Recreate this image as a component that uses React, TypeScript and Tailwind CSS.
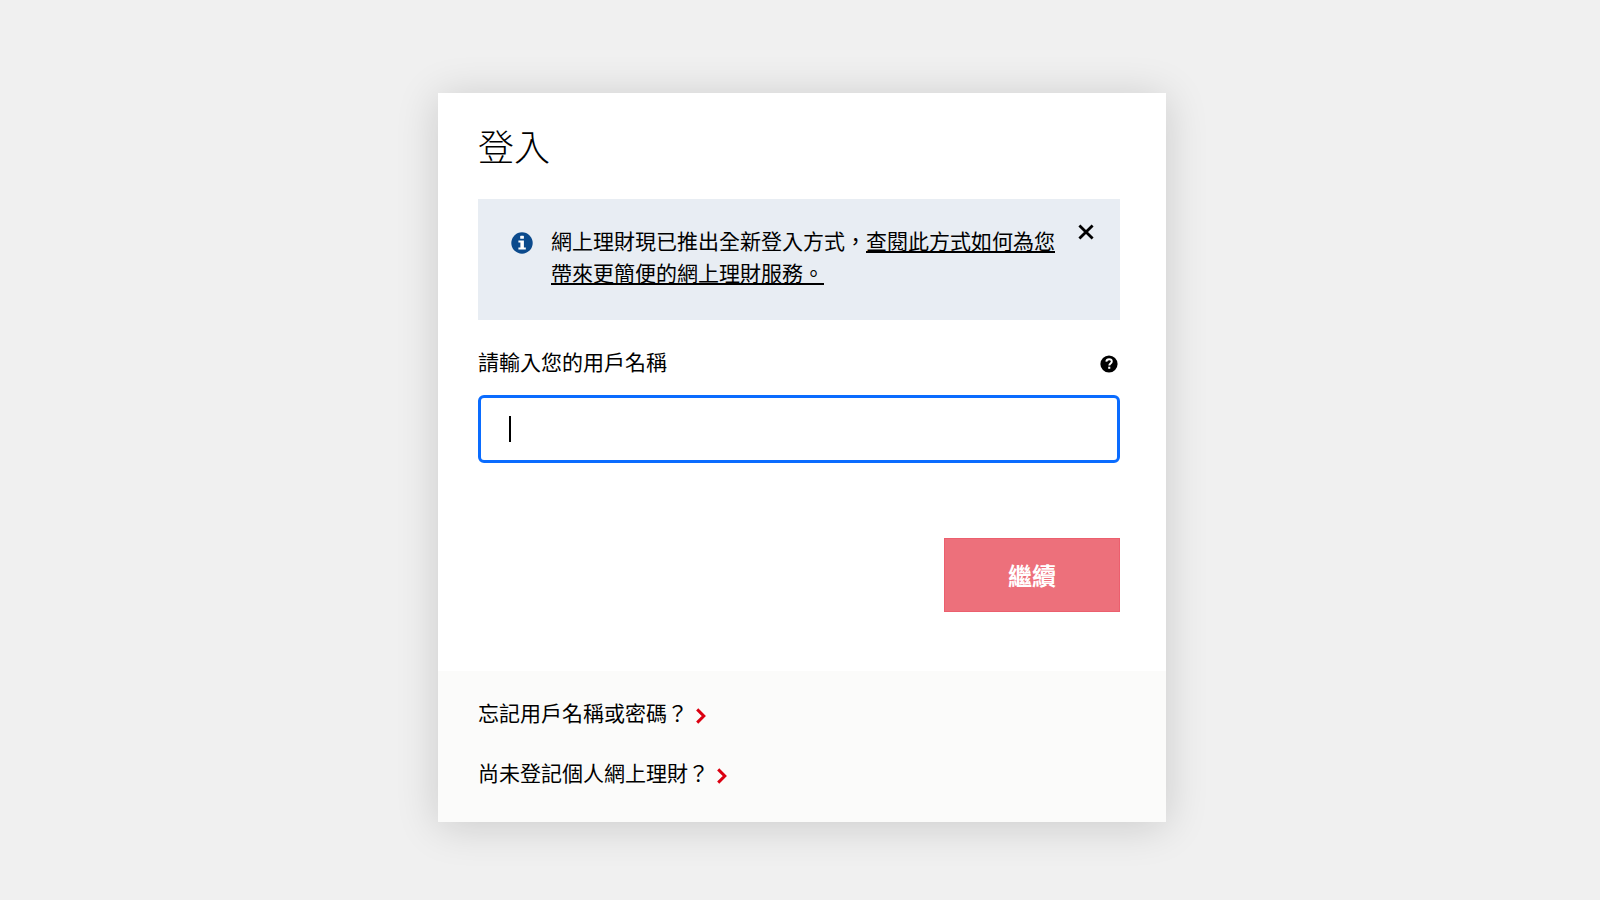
import { useState } from "react";

const HELP_LINKS = [
  { label: "忘記用戶名稱或密碼？", href: "#forgot" },
  { label: "尚未登記個人網上理財？", href: "#register" },
];

function InfoIcon() {
  return (
    <svg viewBox="0 0 22 22" className="mt-2 size-[22px] shrink-0" aria-hidden="true">
      <circle cx="11" cy="11" r="10.7" fill="#0b4a8c" />
      <rect x="9.2" y="3.8" width="3.7" height="3" rx="0.6" fill="#fff" />
      <path d="M7.4 8.4h5.5v7h1.9v2H7.4v-2h2v-5h-2z" fill="#fff" />
    </svg>
  );
}

function CloseIcon() {
  return (
    <svg viewBox="0 0 16 16" className="size-4" aria-hidden="true">
      <path d="M1.4 1.4l13.2 13.2M14.6 1.4L1.4 14.6" stroke="#000" strokeWidth="2.8" fill="none" />
    </svg>
  );
}

function HelpIcon() {
  return (
    <svg viewBox="0 0 18 18" className="size-[18px]" aria-hidden="true">
      <circle cx="9" cy="9" r="8.6" fill="#000" />
      <path
        d="M6.3 6.6C6.5 5 7.6 4.2 9.1 4.2c1.6 0 2.7.9 2.7 2.3 0 2-2.5 2-2.5 4"
        stroke="#fff"
        strokeWidth="1.9"
        fill="none"
      />
      <rect x="8.2" y="11.7" width="2.1" height="2.1" fill="#fff" />
    </svg>
  );
}

function ChevronIcon() {
  return (
    <svg viewBox="0 0 10 16" className="mt-[7px] h-4 w-[10px] shrink-0" aria-hidden="true">
      <path d="M1.2 1.4L7.8 8l-6.6 6.6" stroke="#db0011" strokeWidth="3" fill="none" />
    </svg>
  );
}

function Notice({ onClose }: { onClose: () => void }) {
  return (
    <div className="flex items-start bg-[#e8edf3] pt-[25px] pr-[26px] pb-8 pl-[33px]">
      <InfoIcon />
      <p className="ml-[18px] flex-1 text-[21px] leading-8">
        網上理財現已推出全新登入方式，
        <a href="#new-logon" className="underline decoration-2 underline-offset-2">
          查閱此方式如何為您帶來更簡便的網上理財服務。
        </a>
      </p>
      <button type="button" aria-label="關閉" onClick={onClose} className="ml-4 cursor-pointer">
        <CloseIcon />
      </button>
    </div>
  );
}

export default function App() {
  const [username, setUsername] = useState("");
  const [showNotice, setShowNotice] = useState(true);

  return (
    <div
      lang="zh-HK"
      className="flex min-h-screen flex-col items-center bg-[#f0f0f0] pt-[93px] pr-4 pb-[78px] pl-5 font-['Noto_Sans_CJK_TC',sans-serif] text-black"
    >
      <main className="w-full max-w-[728px] bg-white shadow-[0_4px_40px_rgba(0,0,0,0.16)]">
        <form className="pt-7 pr-[46px] pb-[59px] pl-10" onSubmit={(e) => e.preventDefault()}>
          <h1 className="mb-[30px] text-[36px] leading-[48px] font-light">登入</h1>
          {showNotice && <Notice onClose={() => setShowNotice(false)} />}

          <div className="mt-[25px] mb-[18px] flex items-center justify-between">
            <label htmlFor="username" className="text-[21px] leading-8">
              請輸入您的用戶名稱
            </label>
            <button type="button" aria-label="說明" className="mt-[6px] mr-[2px] cursor-pointer">
              <HelpIcon />
            </button>
          </div>

          <div className="relative">
            <input
              id="username"
              type="text"
              autoComplete="username"
              value={username}
              onChange={(e) => setUsername(e.target.value)}
              className="block h-[68px] w-full rounded-md border-3 border-[#0a6cff] bg-white px-7 text-[21px] outline-none focus:caret-black"
            />
            {username === "" && (
              <span className="pointer-events-none absolute top-[21px] left-[31px] h-[26px] w-[2px] bg-black" />
            )}
          </div>

          <div className="mt-[75px] flex justify-end">
            <button
              type="submit"
              className="h-[74px] w-44 cursor-pointer border border-[#ec5f6e] bg-[#ed707b] text-2xl font-bold text-white"
            >
              繼續
            </button>
          </div>
        </form>

        <nav className="flex flex-col items-start gap-7 bg-[#fbfbfa] px-10 pt-[25px] pb-[34px]">
          {HELP_LINKS.map((link) => (
            <a key={link.href} href={link.href} className="flex items-center gap-2 text-[21px] leading-8">
              {link.label}
              <ChevronIcon />
            </a>
          ))}
        </nav>
      </main>
    </div>
  );
}
